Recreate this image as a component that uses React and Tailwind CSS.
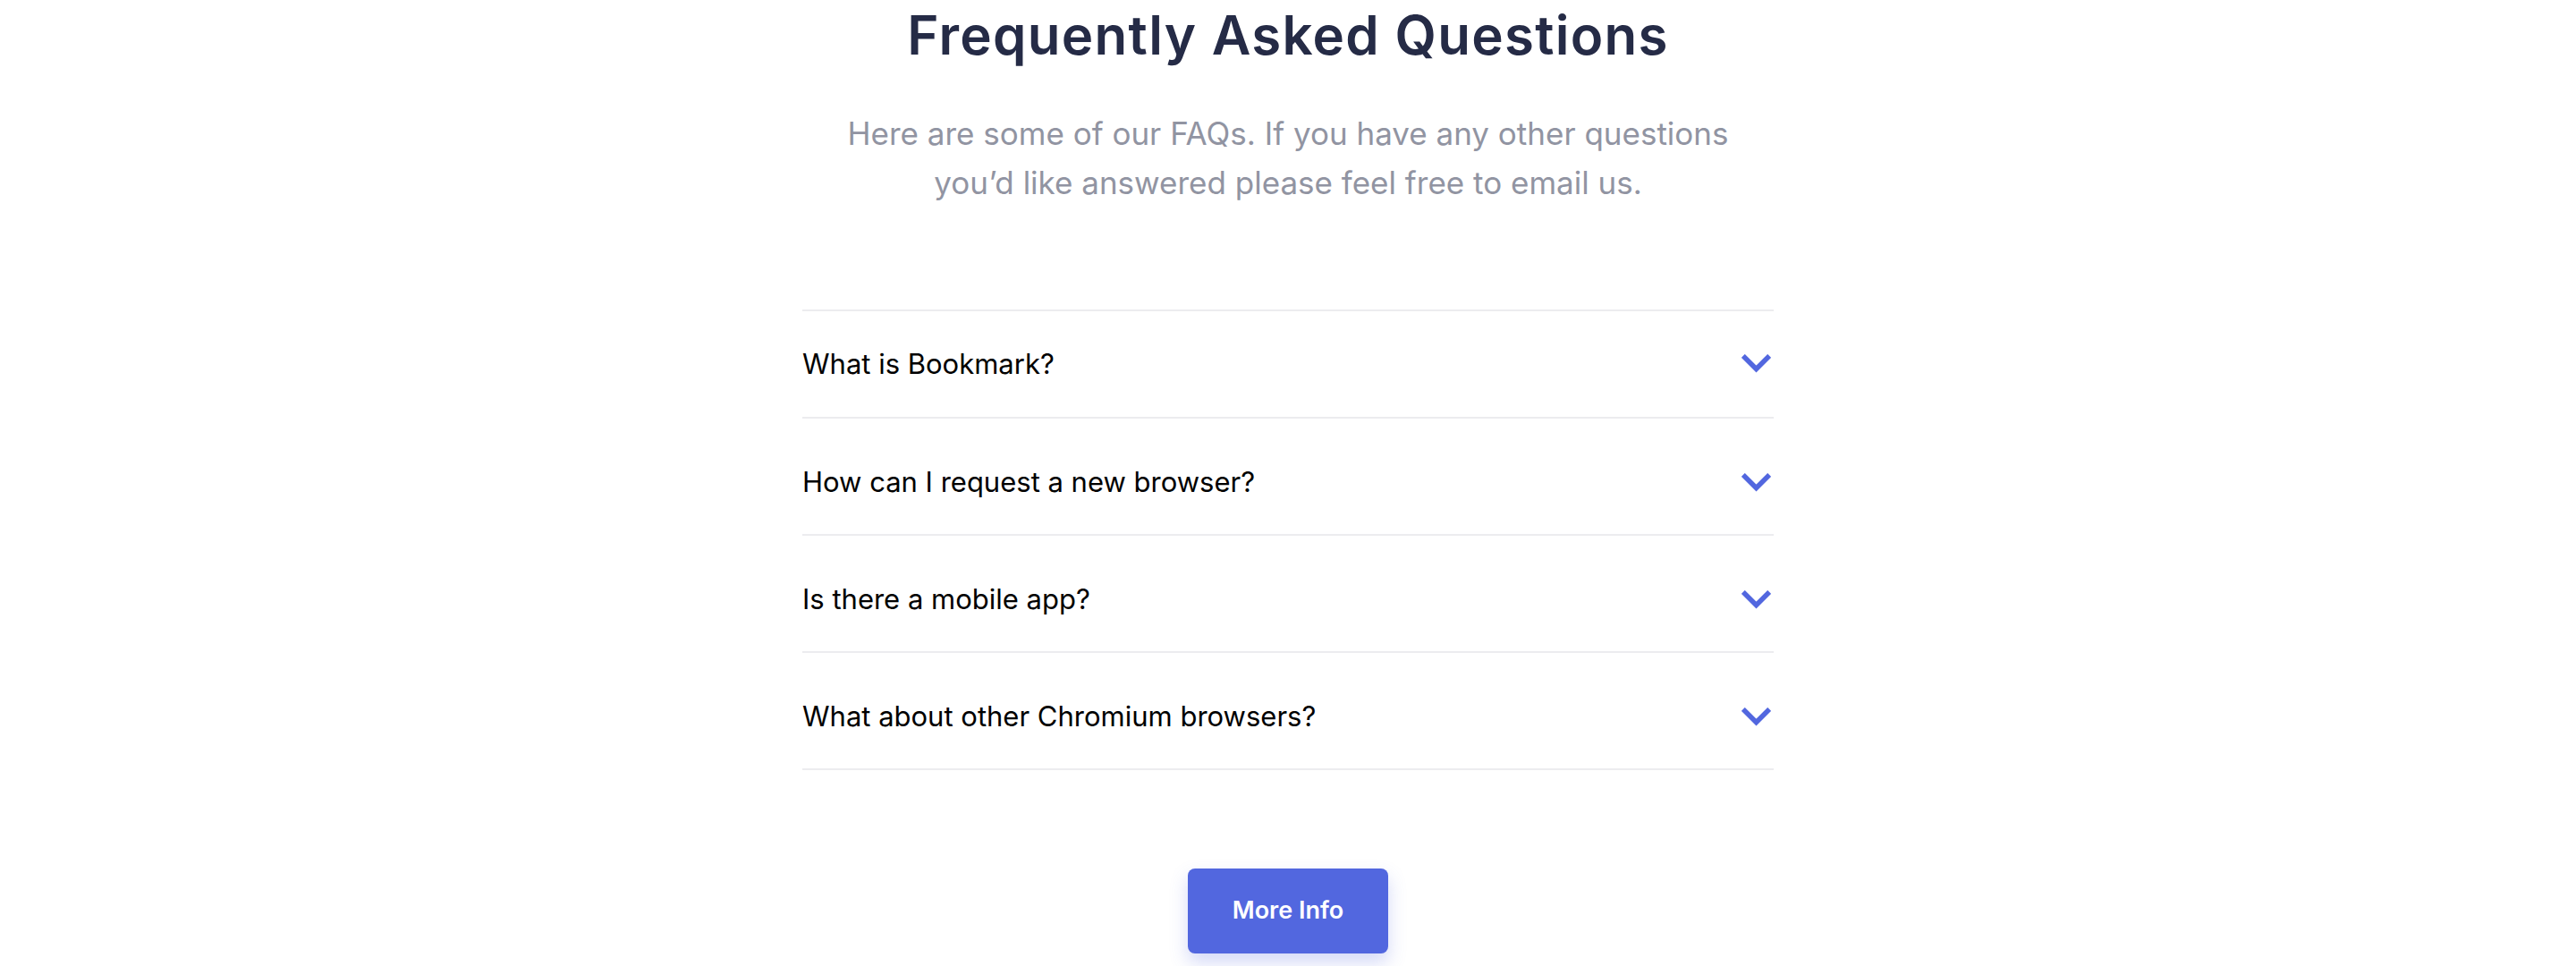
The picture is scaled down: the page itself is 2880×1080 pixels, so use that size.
import React from 'react';

const faqs = [
  'What is Bookmark?',
  'How can I request a new browser?',
  'Is there a mobile app?',
  'What about other Chromium browsers?',
];

// Chevron used on every question row
const Arrow = () => (
  <svg width="33" height="22" viewBox="0 0 18 12" fill="none">
    <path d="M1 1l8 8 8-8" stroke="#5267DF" strokeWidth="3" />
  </svg>
);

export default function App() {
  return (
    <div className="w-full min-h-[1080px] bg-white flex flex-col items-center font-['Inter',sans-serif]">
      <h1 className="mt-[5px] text-[60px] leading-[68px] font-semibold text-[#252B46] tracking-[1.3px]">
        Frequently Asked Questions
      </h1>
      <p className="mt-[49px] text-[35px] leading-[55px] text-[#9194A2] text-center">
        Here are some of our FAQs. If you have any other questions
        <br />
        you’d like answered please feel free to email us.
      </p>

      <div className="mt-[114px] w-[1086px] border-b-2 border-[#ececef]">
        {faqs.map((q, i) => (
          <div
            key={q}
            className={`flex items-center justify-between border-t-2 border-[#ececef] pr-[3px] ${
              i === 0 ? 'h-[120px]' : 'h-[131px] pt-[14px]'
            }`}
          >
            <span className="text-[31px] text-black">{q}</span>
            <Arrow />
          </div>
        ))}
      </div>

      <button className="mt-[110px] w-[224px] h-[95px] rounded-lg bg-[#5267DF] text-white text-[27px] font-semibold shadow-[0_10px_20px_rgba(82,103,223,0.25)]">
        More Info
      </button>
    </div>
  );
}
